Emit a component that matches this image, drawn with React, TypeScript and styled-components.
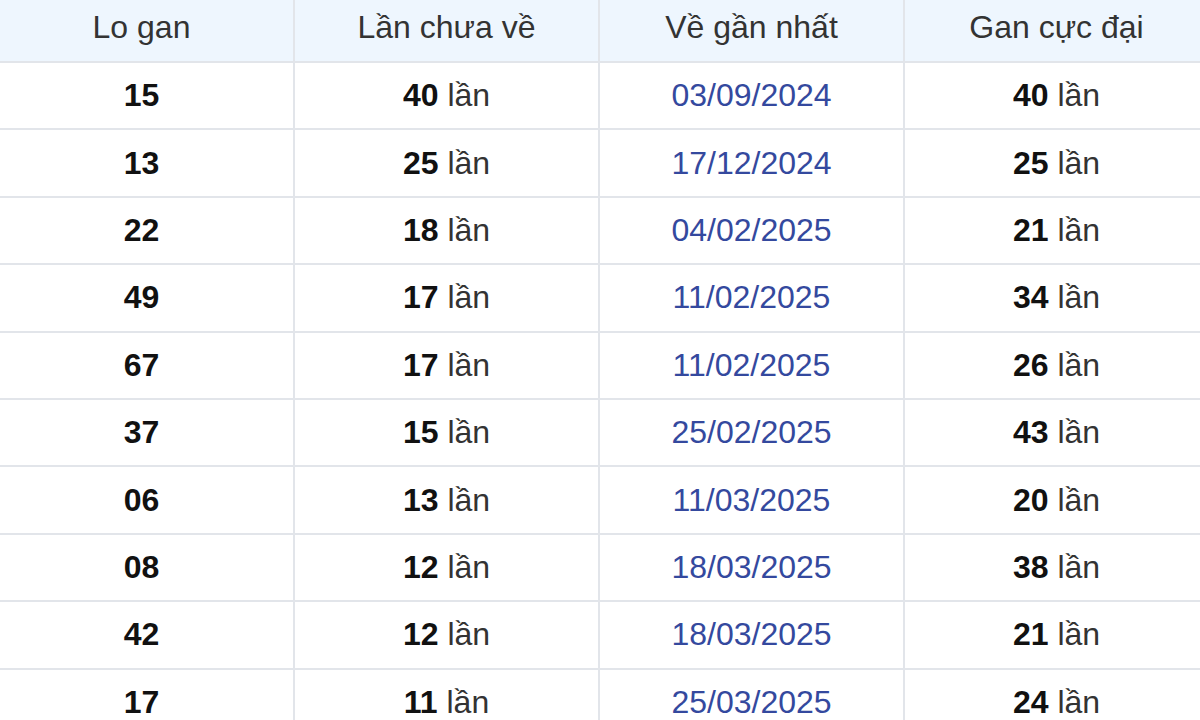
import React from "react"
import styled, { createGlobalStyle } from "styled-components"

interface GanRow {
  lo: string
  current: number
  lastDate: string
  max: number
}

const rows: GanRow[] = [
  { lo: "15", current: 40, lastDate: "03/09/2024", max: 40 },
  { lo: "13", current: 25, lastDate: "17/12/2024", max: 25 },
  { lo: "22", current: 18, lastDate: "04/02/2025", max: 21 },
  { lo: "49", current: 17, lastDate: "11/02/2025", max: 34 },
  { lo: "67", current: 17, lastDate: "11/02/2025", max: 26 },
  { lo: "37", current: 15, lastDate: "25/02/2025", max: 43 },
  { lo: "06", current: 13, lastDate: "11/03/2025", max: 20 },
  { lo: "08", current: 12, lastDate: "18/03/2025", max: 38 },
  { lo: "42", current: 12, lastDate: "18/03/2025", max: 21 },
  { lo: "17", current: 11, lastDate: "25/03/2025", max: 24 },
]

const GlobalStyle = createGlobalStyle`
  html, body {
    margin: 0;
    padding: 0;
    background: #fff;
    overflow: hidden;
  }
  body {
    width: 1200px;
    height: 720px;
    font-family: "Liberation Sans", Arial, sans-serif;
  }
`

const Count: React.FC<{ value: number }> = ({ value }) => (
  <>
    <S.Strong>{value}</S.Strong> lần
  </>
)

const App: React.FC = () => {
  return (
    <S.Page>
      <GlobalStyle />
      <S.Table>
        <thead>
          <tr>
            <S.Head>Lo gan</S.Head>
            <S.Head>Lần chưa về</S.Head>
            <S.Head>Về gần nhất</S.Head>
            <S.Head>Gan cực đại</S.Head>
          </tr>
        </thead>
        <tbody>
          {rows.map((row, i) => (
            <tr key={i}>
              <S.Cell $bold>{row.lo}</S.Cell>
              <S.Cell>
                <Count value={row.current} />
              </S.Cell>
              <S.Cell $link>{row.lastDate}</S.Cell>
              <S.Cell>
                <Count value={row.max} />
              </S.Cell>
            </tr>
          ))}
        </tbody>
      </S.Table>
    </S.Page>
  )
}

const S = {
  Page: styled.div`
    width: 1200px;
    height: 720px;
    overflow: hidden;
  `,
  Table: styled.table`
    width: 1222px;
    margin-left: -12px;
    border-collapse: collapse;
    table-layout: fixed;
    font-family: "Liberation Sans", Arial, sans-serif;
    font-size: 32px;
    color: #333;
  `,
  Head: styled.th`
    height: 62px;
    padding: 0 0 6px;
    box-sizing: border-box;
    background: #eef6fe;
    font-family: "Liberation Sans", Arial, sans-serif;
    font-weight: normal;
    color: #333;
    text-align: center;
    border: 2px solid #e2e5ea;
    border-top: none;
  `,
  Cell: styled.td<{ $bold?: boolean; $link?: boolean }>`
    height: 65.4px;
    padding: 0;
    text-align: center;
    vertical-align: middle;
    border: 2px solid #e2e5ea;
    font-family: "Liberation Sans", Arial, sans-serif;
    font-weight: ${(p) => (p.$bold ? "bold" : "normal")};
    color: ${(p) => (p.$link ? "#34499e" : p.$bold ? "#111" : "#333")};
  `,
  Strong: styled.b`
    color: #111;
  `,
}

export default App
